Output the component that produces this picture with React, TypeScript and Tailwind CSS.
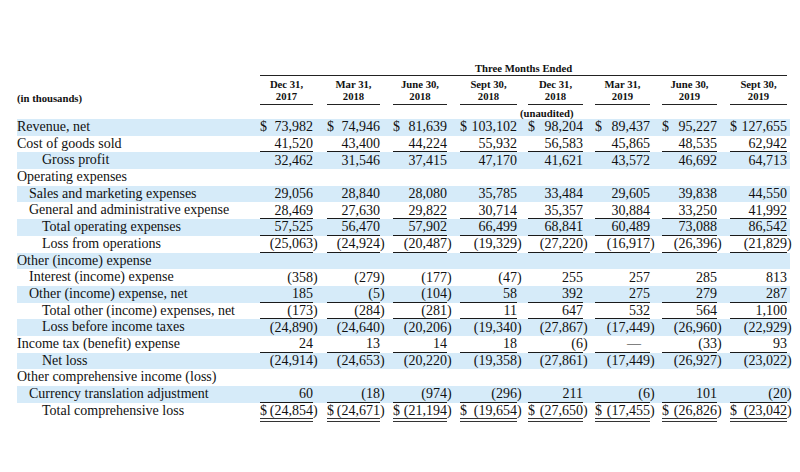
import React from "react";

type Row = {
  label: string;
  indent: 0 | 1 | 2;
  values?: string[];
  dollar?: boolean;
  under?: "single" | "double";
};

const COLS = [
  { pl: "pl-[13px]", w: "w-[53px]" },
  { pl: "pl-[14px]", w: "w-[53px]" },
  { pl: "pl-[13px]", w: "w-[54px]" },
  { pl: "pl-[13px]", w: "w-[57px]" },
  { pl: "pl-[11px]", w: "w-[55px]" },
  { pl: "pl-[12px]", w: "w-[55px]" },
  { pl: "pl-[12px]", w: "w-[55px]" },
  { pl: "pl-[13px]", w: "w-[57px]" },
];

const HEAD = [
  ["Dec 31,", "2017"],
  ["Mar 31,", "2018"],
  ["June 30,", "2018"],
  ["Sept 30,", "2018"],
  ["Dec 31,", "2018"],
  ["Mar 31,", "2019"],
  ["June 30,", "2019"],
  ["Sept 30,", "2019"],
];

const ROWS: Row[] = [
  { label: "Revenue, net", indent: 0, dollar: true, values: ["73,982", "74,946", "81,639", "103,102", "98,204", "89,437", "95,227", "127,655"] },
  { label: "Cost of goods sold", indent: 0, under: "single", values: ["41,520", "43,400", "44,224", "55,932", "56,583", "45,865", "48,535", "62,942"] },
  { label: "Gross profit", indent: 2, values: ["32,462", "31,546", "37,415", "47,170", "41,621", "43,572", "46,692", "64,713"] },
  { label: "Operating expenses", indent: 0 },
  { label: "Sales and marketing expenses", indent: 1, values: ["29,056", "28,840", "28,080", "35,785", "33,484", "29,605", "39,838", "44,550"] },
  { label: "General and administrative expense", indent: 1, under: "single", values: ["28,469", "27,630", "29,822", "30,714", "35,357", "30,884", "33,250", "41,992"] },
  { label: "Total operating expenses", indent: 2, under: "single", values: ["57,525", "56,470", "57,902", "66,499", "68,841", "60,489", "73,088", "86,542"] },
  { label: "Loss from operations", indent: 2, under: "single", values: ["(25,063)", "(24,924)", "(20,487)", "(19,329)", "(27,220)", "(16,917)", "(26,396)", "(21,829)"] },
  { label: "Other (income) expense", indent: 0 },
  { label: "Interest (income) expense", indent: 1, values: ["(358)", "(279)", "(177)", "(47)", "255", "257", "285", "813"] },
  { label: "Other (income) expense, net", indent: 1, under: "single", values: ["185", "(5)", "(104)", "58", "392", "275", "279", "287"] },
  { label: "Total other (income) expenses, net", indent: 2, under: "single", values: ["(173)", "(284)", "(281)", "11", "647", "532", "564", "1,100"] },
  { label: "Loss before income taxes", indent: 2, values: ["(24,890)", "(24,640)", "(20,206)", "(19,340)", "(27,867)", "(17,449)", "(26,960)", "(22,929)"] },
  { label: "Income tax (benefit) expense", indent: 0, under: "single", values: ["24", "13", "14", "18", "(6)", "—", "(33)", "93"] },
  { label: "Net loss", indent: 2, values: ["(24,914)", "(24,653)", "(20,220)", "(19,358)", "(27,861)", "(17,449)", "(26,927)", "(23,022)"] },
  { label: "Other comprehensive income (loss)", indent: 0 },
  { label: "Currency translation adjustment", indent: 1, under: "single", values: ["60", "(18)", "(974)", "(296)", "211", "(6)", "101", "(20)"] },
  { label: "Total comprehensive loss", indent: 2, dollar: true, under: "double", values: ["(24,854)", "(24,671)", "(21,194)", "(19,654)", "(27,650)", "(17,455)", "(26,826)", "(23,042)"] },
];

function Num({ v }: { v: string }) {
  if (v === "—") return <span className="pr-[9px]">—</span>;
  if (v.endsWith(")")) {
    return (
      <span className="whitespace-nowrap">
        {v.slice(0, -1)}
        <span className="inline-block w-0">)</span>
      </span>
    );
  }
  return <span className="whitespace-nowrap">{v}</span>;
}

export default function App() {
  return (
    <div
      className="w-[800px] h-[472px] bg-white text-[#111] overflow-hidden"
      style={{ fontFamily: '"Liberation Serif", "Times New Roman", serif' }}
    >
      <div className="pl-[17px] pt-[61px]">
        {/* Header */}
        <div className="flex text-[10.7px] font-bold leading-[12px]">
          <div className="w-[230px] shrink-0 flex flex-col justify-end pb-[15px]">
            <div>(in thousands)</div>
          </div>
          <div className="flex flex-col">
            <div className="ml-[13px] w-[527px] text-center leading-[14px] h-[15px] border-b border-[#222]">
              Three Months Ended
            </div>
            <div className="flex">
              {HEAD.map((h, i) => (
                <div key={i} className={COLS[i].pl}>
                  <div className={`${COLS[i].w} text-center pt-[2px] pb-[2px] border-b border-[#222]`}>
                    <div>{h[0]}</div>
                    <div>{h[1]}</div>
                  </div>
                </div>
              ))}
            </div>
            <div className="pl-[273px] pt-[2px] h-[14px] leading-[12px]">(unaudited)</div>
          </div>
        </div>
        {/* Body */}
        <div className="text-[14px]">
          {ROWS.map((r, ri) => (
            <div
              key={ri}
              className={`flex w-[773px] h-[16.7px] leading-[16px] ${ri % 2 === 0 ? "bg-[#d6ebf9]" : ""}`}
            >
              <div
                className={`w-[230px] shrink-0 whitespace-nowrap ${
                  r.indent === 0 ? "" : r.indent === 1 ? "pl-[12px]" : "pl-[25px]"
                }`}
              >
                {r.label}
              </div>
              {r.values &&
                r.values.map((v, ci) => (
                  <div key={ci} className={`${COLS[ci].pl} h-full`}>
                    <div
                      className={`${COLS[ci].w} h-full relative flex items-center ${
                        r.dollar ? "justify-between" : "justify-end"
                      }`}
                    >
                      {r.dollar && <span>$</span>}
                      <Num v={v} />
                      {r.under === "single" && (
                        <div className="absolute left-0 right-0 bottom-0 h-px bg-[#1a1a1a]" />
                      )}
                      {r.under === "double" && (
                        <div className="absolute left-0 right-0 -bottom-[3px] h-[4px] border-y border-[#333]" />
                      )}
                    </div>
                  </div>
                ))}
            </div>
          ))}
        </div>
      </div>
    </div>
  );
}
